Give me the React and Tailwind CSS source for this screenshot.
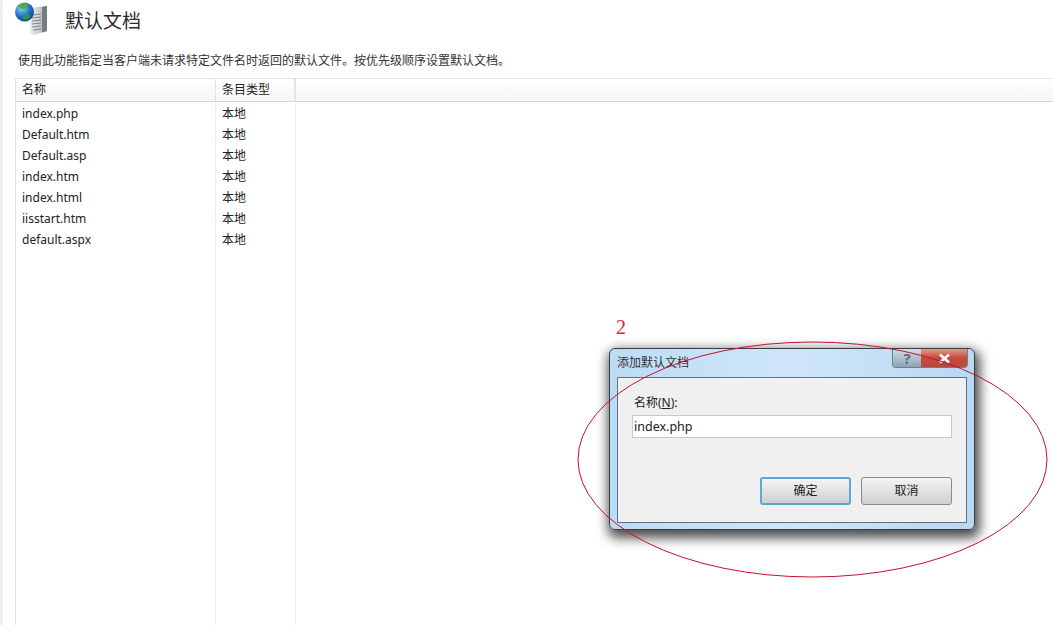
import React from 'react';

const rows = ['index.php', 'Default.htm', 'Default.asp', 'index.htm', 'index.html', 'iisstart.htm', 'default.aspx'];

const font = { fontFamily: '"Noto Sans", "Noto Sans CJK SC", sans-serif' };

const ServerIcon = () => (
  <svg width="36" height="42" viewBox="0 0 36 42" className="shrink-0">
    <defs>
      <linearGradient id="srv" x1="0" y1="0" x2="1" y2="0">
        <stop offset="0" stopColor="#eceeee" />
        <stop offset="0.65" stopColor="#c2c6c7" />
        <stop offset="1" stopColor="#8b8f91" />
      </linearGradient>
      <radialGradient id="globe" cx="0.35" cy="0.3" r="0.8">
        <stop offset="0" stopColor="#8fd0f2" />
        <stop offset="0.55" stopColor="#1f73c4" />
        <stop offset="1" stopColor="#0b3f86" />
      </radialGradient>
    </defs>
    <path d="M15 7 L32 5 L32 30 L19 34 L15 32 Z" fill="url(#srv)" />
    <path d="M27 6 L32 5 L32 30 L27 31.5 Z" fill="#777c7e" />
    <path d="M17 14 L26 13 M17 17 L26 16 M17 20 L26 19 M17 23 L26 22 M17 26 L26 25 M18 29 L26 28" stroke="#7f8486" strokeWidth="1" />
    <circle cx="9.5" cy="11" r="9.5" fill="url(#globe)" />
    <path d="M4 4 C7 2 11 2 13 4 C11 6 11 8 8 8 C5 8 5 7 4 4 Z" fill="#4fae3c" />
    <path d="M8 14 C11 12 16 13 15 16 C13 19 9 19 7 17 Z" fill="#2f9a3d" />
  </svg>
);

export default function App() {
  return (
    <div className="relative w-[1053px] h-[625px] overflow-hidden bg-white text-[13px] text-[#222]" style={font}>
      <div className="flex h-full border-l-[3px] border-[#f0f0f0] pl-3 flex-col">
        <div className="flex items-center h-[42px] pt-[1px]">
          <ServerIcon />
          <h1 className="ml-[14px] text-[19px] font-normal text-[#2b2b2b]">默认文档</h1>
        </div>
        <p className="mt-[10px] ml-[3px] h-[18px] leading-[18px] text-[12px] text-[#333]">
          使用此功能指定当客户端未请求特定文件名时返回的默认文件。按优先级顺序设置默认文档。
        </p>
        <div className="mt-[8px] flex-1 border-l border-t border-[#dfe3e6] flex flex-col">
          <div className="flex h-[23px] border-b border-[#d5d5d5] bg-gradient-to-b from-white to-[#f5f5f5] text-[12px] leading-[22px]">
            <div className="w-[200px] pl-[6px] border-r border-[#e3e3e3]">名称</div>
            <div className="w-[80px] pl-[6px] border-r-2 border-[#e3e3e3]">条目类型</div>
          </div>
          <div className="flex flex-1 pt-[1px]">
            <div className="w-[200px] border-r border-[#eef0f2]">
              {rows.map(name => (
                <div key={name} className="h-[21px] pl-[6px] leading-[21px] text-[12px]">{name}</div>
              ))}
            </div>
            <div className="w-[80px] border-r border-[#eef0f2]">
              {rows.map(name => (
                <div key={name} className="h-[21px] pl-[6px] leading-[21px] text-[12px]">本地</div>
              ))}
            </div>
          </div>
        </div>
      </div>

      {/* dialog */}
      <div className="absolute left-[609px] top-[348px] w-[366px] h-[182px] rounded-[6px] border border-[#3a3f44] bg-gradient-to-r from-[#bcdcf5] via-[#cfe6f9] to-[#b9d8f2] shadow-[2px_5px_12px_3px_rgba(0,0,0,0.7)] p-[7px] pt-0">
        <div className="h-[28px] pt-[6px] text-[12px] leading-[16px] text-[#333]">添加默认文档</div>
        <div className="absolute right-[6px] top-0 flex h-[19px] rounded-b-[4px] border border-t-0 border-[#6e7f8e] overflow-hidden">
          <div className="flex w-[28px] items-center justify-center bg-gradient-to-b from-[#d3dde6] to-[#8ea3b5] text-[15px] leading-[17px] font-bold text-[#5f6f7d]">?</div>
          <div className="flex w-[46px] items-center justify-center bg-gradient-to-b from-[#e2988c] via-[#c8483a] to-[#b4493c]">
            <svg width="13" height="11" viewBox="0 0 13 11">
              <path d="M2 1.5 L11 9.5 M11 1.5 L2 9.5" stroke="#fff" strokeWidth="2.6" />
            </svg>
          </div>
        </div>
        <div className="h-[146px] border border-[#5c7287] bg-[#f0f0f0] px-[14px] pt-[17px]">
          <div className="ml-[2px] h-[16px] text-[12px] leading-[16px]">
            名称(<span className="underline">N</span>):
          </div>
          <div className="mt-[4px] h-[23px] w-[320px] border border-[#b5cfe0] bg-white pl-[1px] text-[12.5px] leading-[21px]">index.php</div>
          <div className="mt-[39px] flex justify-end gap-[10px]">
            <button className="w-[91px] h-[28px] rounded-[3px] border-2 border-[#5aa9cf] bg-gradient-to-b from-[#f4f4f4] to-[#cfcfcf] text-[12px] text-[#222]">确定</button>
            <button className="w-[91px] h-[28px] rounded-[3px] border border-[#8a8a8a] bg-gradient-to-b from-[#f4f4f4] to-[#cfcfcf] text-[12px] text-[#222]">取消</button>
          </div>
        </div>
      </div>

      {/* red annotation */}
      <svg className="absolute left-0 top-0 pointer-events-none" width="1053" height="625">
        <ellipse cx="812.5" cy="459.5" rx="234.5" ry="117.5" fill="none" stroke="#c8102e" strokeWidth="1" />
      </svg>
      <div className="absolute left-[616px] top-[315px] text-[20px] leading-[24px] text-[#d0282e]" style={{ fontFamily: '"Liberation Serif", serif' }}>2</div>
    </div>
  );
}
